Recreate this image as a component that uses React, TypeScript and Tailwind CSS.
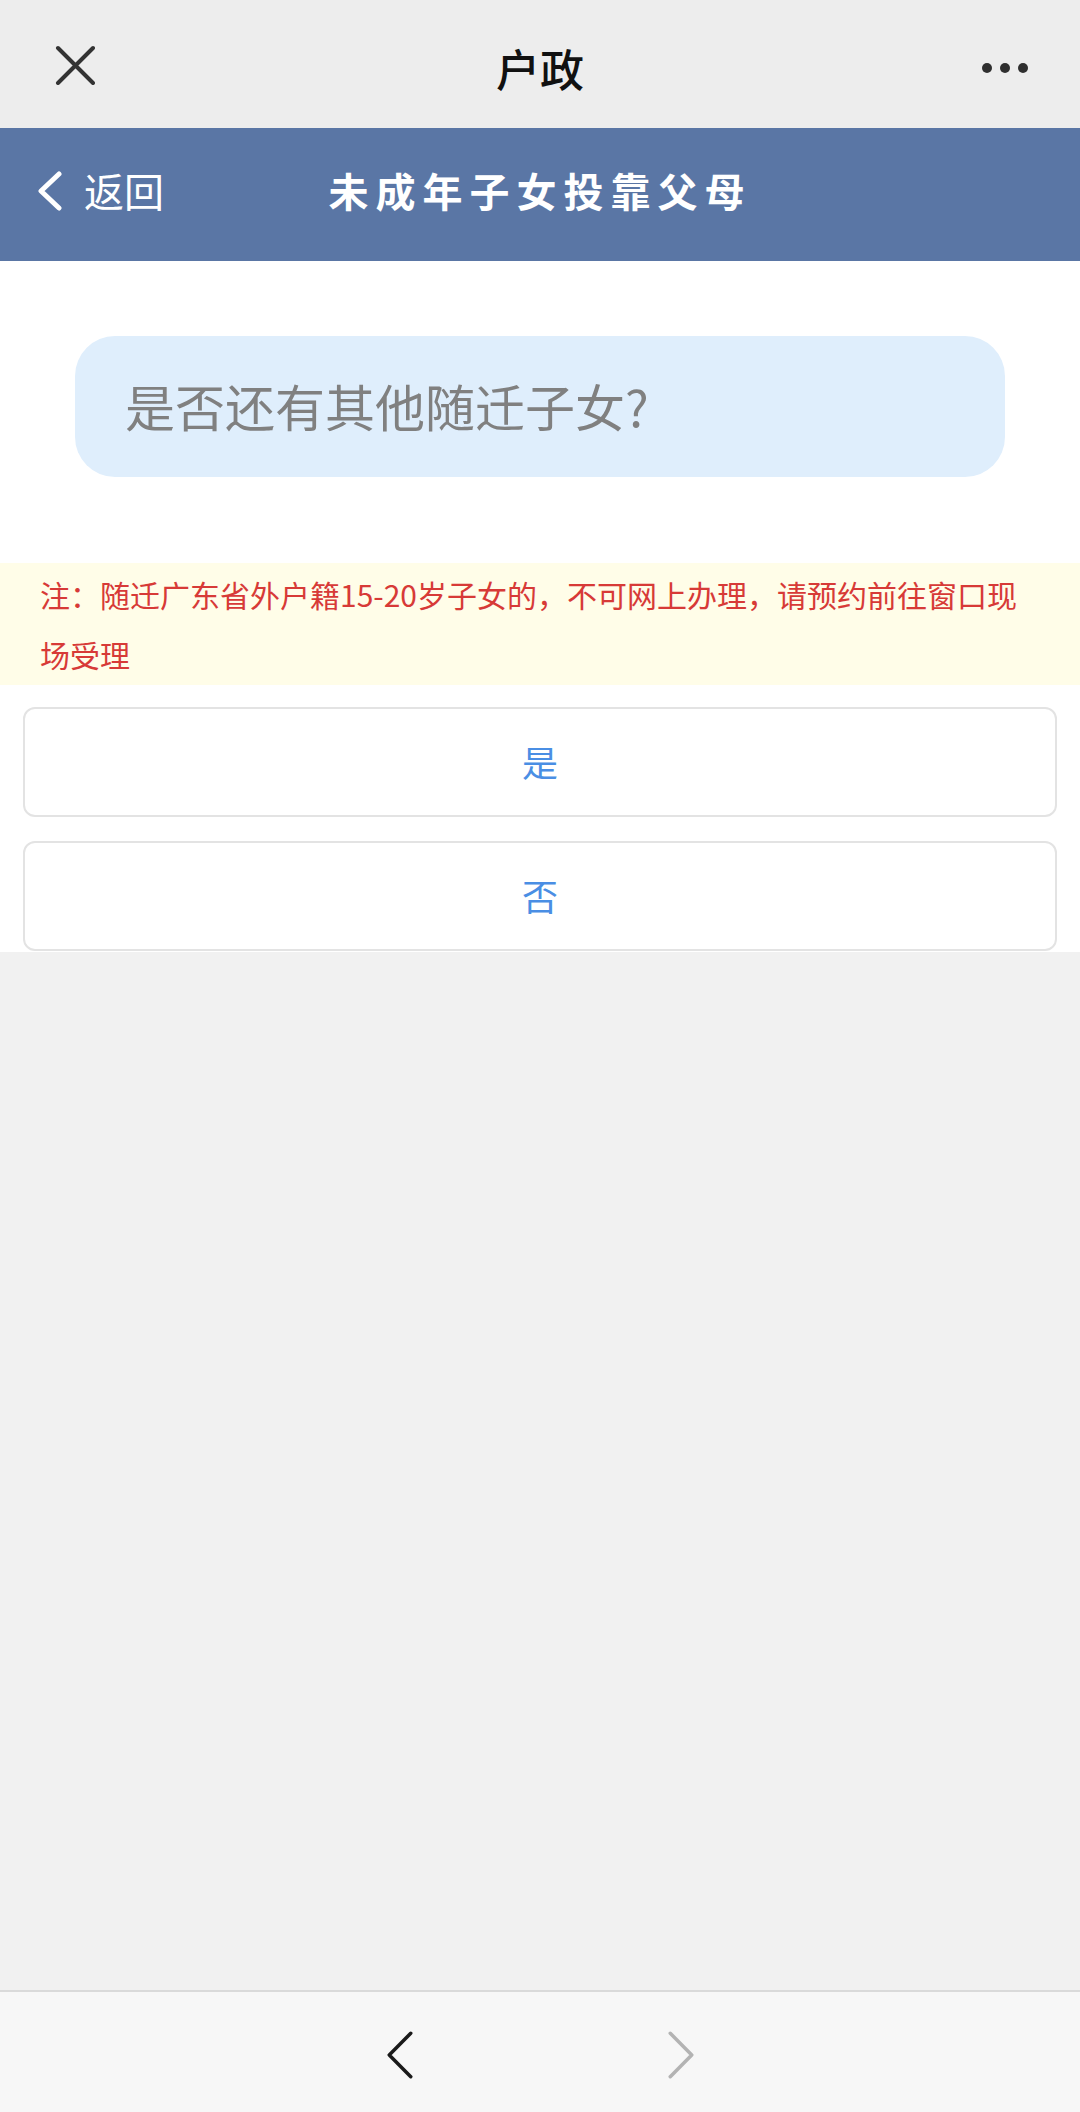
const FONT = "font-['Noto_Sans_CJK_SC','Noto_Sans',sans-serif]";

const CloseIcon = () => (
  <svg width="40" height="40" viewBox="0 0 40 40" fill="none">
    <path d="M3 3L38 38M38 3L3 38" stroke="#333333" strokeWidth="4" strokeLinecap="round" />
  </svg>
);

const Chevron = ({ dir, color, w, h, stroke }: { dir: 'left' | 'right'; color: string; w: number; h: number; stroke: number }) => {
  const pad = stroke / 2 + 0.5;
  const pts =
    dir === 'left'
      ? `${w - pad},${pad} ${pad},${h / 2} ${w - pad},${h - pad}`
      : `${pad},${pad} ${w - pad},${h / 2} ${pad},${h - pad}`;
  return (
    <svg width={w} height={h} viewBox={`0 0 ${w} ${h}`} fill="none">
      <polyline points={pts} stroke={color} strokeWidth={stroke} strokeLinecap="round" strokeLinejoin="round" />
    </svg>
  );
};

const App = () => {
  return (
    <div className={`${FONT} flex h-[2112px] w-[1080px] flex-col bg-[#f1f1f1]`}>
      {/* 小程序顶栏 */}
      <header className="grid h-[128px] grid-cols-[1fr_auto_1fr] items-center bg-[#ededed]">
        <div className="flex pl-[55px] pt-[2px]">
          <CloseIcon />
        </div>
        <h1 className="mt-[8px] text-[44px] font-medium leading-none text-[#111111]">户政</h1>
        <div className="mt-[8px] flex justify-end gap-[8px] pr-[52px]">
          <span className="h-[10px] w-[10px] rounded-full bg-[#2f2f2f]" />
          <span className="h-[10px] w-[10px] rounded-full bg-[#2f2f2f]" />
          <span className="h-[10px] w-[10px] rounded-full bg-[#2f2f2f]" />
        </div>
      </header>

      {/* 页面标题栏 */}
      <div className="grid h-[133px] grid-cols-[1fr_auto_1fr] items-center bg-[#5a76a5] pb-[8px]">
        <button type="button" className="flex items-center pl-[38px] text-white">
          <Chevron dir="left" color="#ffffff" w={24} h={40} stroke={5} />
          <span className="mb-[2px] ml-[22px] text-[40px] leading-none">返回</span>
        </button>
        <h2 className="mb-[2px] text-[40px] font-bold leading-none tracking-[7px] text-white">未成年子女投靠父母</h2>
        <div />
      </div>

      <main className="bg-white pb-[1px] pt-[75px]">
        <div className="mx-[75px] flex h-[141px] items-center rounded-[40px] bg-[#dfeefc] pl-[50px]">
          <p className="mb-[3px] text-[50px] leading-none text-[#808080]">是否还有其他随迁子女?</p>
        </div>

        <p className="mt-[86px] bg-[#fffde8] px-[40px] py-px text-[30px] leading-[60px] text-[#d73a37]">
          注：随迁广东省外户籍15-20岁子女的，不可网上办理，请预约前往窗口现场受理
        </p>

        <div className="mt-[22px] flex flex-col gap-[24px] px-[23px]">
          {['是', '否'].map((label) => (
            <button
              key={label}
              type="button"
              className="flex h-[110px] items-center justify-center rounded-[12px] border-2 border-[#e3e3e3] bg-white pb-[3px] text-[36px] text-[#4a8ee4]"
            >
              {label}
            </button>
          ))}
        </div>
      </main>

      <div className="flex-1" />

      {/* 底部前进后退 */}
      <footer className="flex h-[122px] items-center justify-center gap-[255px] border-t-2 border-[#dadada] bg-[#f7f7f7] pt-[6px]">
        <Chevron dir="left" color="#1a1a1a" w={26} h={48} stroke={3.5} />
        <Chevron dir="right" color="#b3b3b3" w={26} h={48} stroke={3.5} />
      </footer>
    </div>
  );
};

export default App;
